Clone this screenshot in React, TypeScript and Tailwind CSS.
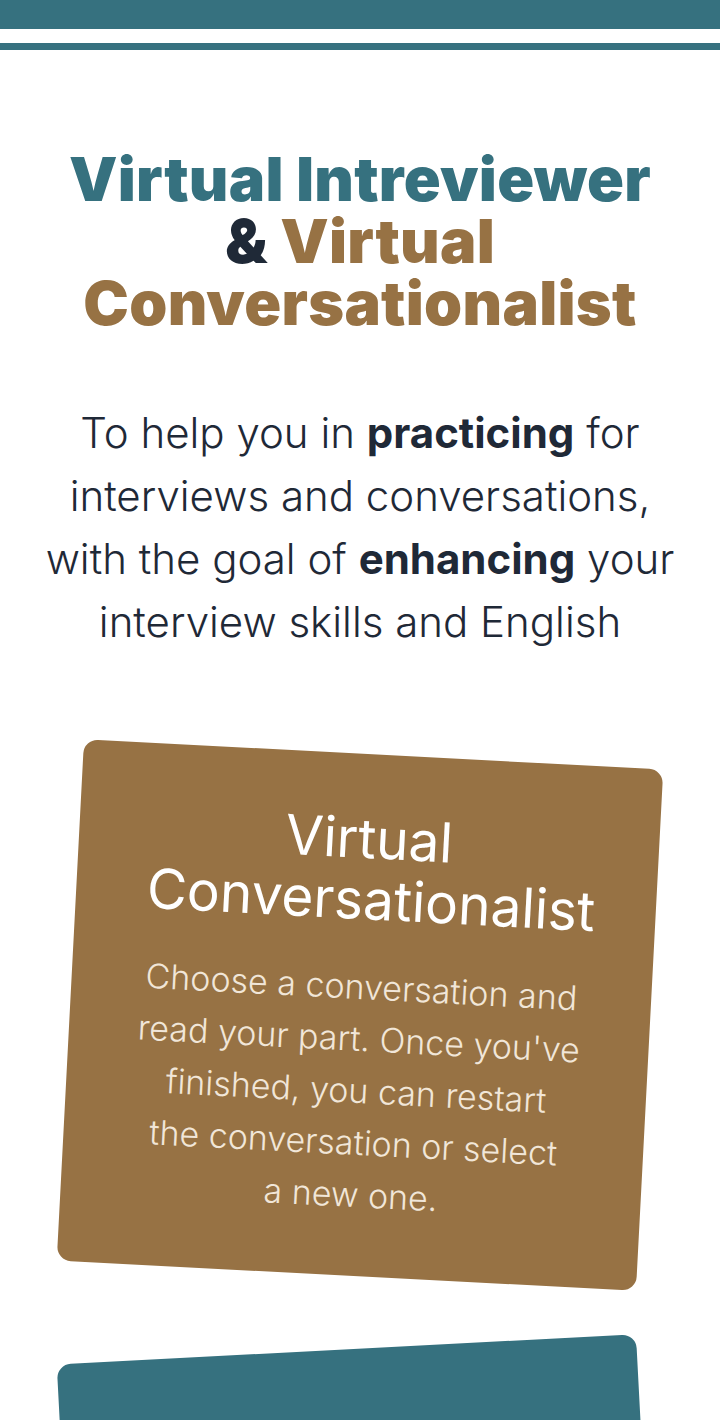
export default function App() {
  return (
    <div className="min-h-[1420px] overflow-hidden bg-white font-['Inter',sans-serif]">
      <div className="h-[29px] bg-[#36717f]" />
      <div className="mt-[14px] h-[7px] bg-[#36717f]" />
      <main className="flex flex-col items-center">
        <h1 className="mt-[98px] whitespace-nowrap text-center text-[61px] leading-[62px] font-black tracking-[0.3px] text-[#36717f]">
          Virtual Intreviewer
          <br />
          <span className="text-[#1f2937]">&amp;</span>{" "}
          <span className="text-[#977244]">
            Virtual
            <br />
            Conversationalist
          </span>
        </h1>
        <p className="mt-[67px] whitespace-nowrap text-center text-[42px] leading-[63px] font-light text-[#1f2937]">
          To help you in <b className="font-bold">practicing</b> for
          <br />
          interviews and conversations,
          <br />
          with the goal of <b className="font-bold">enhancing</b> your
          <br />
          interview skills and English
        </p>
        <section className="mt-[101px] flex h-[522px] w-[580px] rotate-3 flex-col items-center rounded-[14px] bg-[#977244] pt-[54px] text-center">
          <h2 className="whitespace-nowrap text-[55px] leading-[61px] font-normal text-white">
            Virtual
            <br />
            <span className="pl-[10px]">Conversationalist</span>
          </h2>
          <p className="mt-[31px] whitespace-nowrap text-[34px] leading-[52px] font-light text-[#f1e6d8]">
            Choose a conversation and
            <br />
            read your part. Once you've
            <br />
            finished, you can restart
            <br />
            the conversation or select
            <br />
            a new one.
          </p>
        </section>
        <section className="mt-[73px] h-[522px] w-[580px] -rotate-3 rounded-[14px] bg-[#36717f]" />
      </main>
    </div>
  );
}
